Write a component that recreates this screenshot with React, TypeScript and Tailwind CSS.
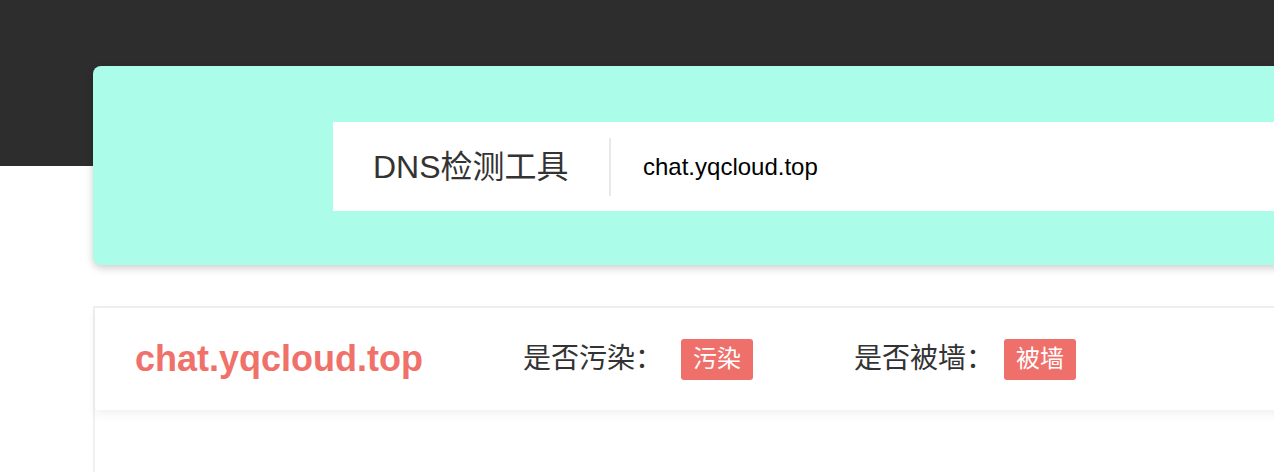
import React from 'react';

const font = "font-['Liberation_Sans','Noto_Sans_CJK_SC',sans-serif]";

const checks = [
  { label: '是否污染：', value: '污染', lead: 'ml-[100px]', gap: 'ml-[18px]' },
  { label: '是否被墙：', value: '被墙', lead: 'ml-[101px]', gap: 'ml-[10px]' },
];

const App: React.FC = () => {
  const domain = 'chat.yqcloud.top';

  return (
    <div className={`h-[472px] w-full overflow-hidden bg-white ${font}`}>
      {/* top dark band */}
      <div className="h-[166px] bg-[#2d2d2d]" />

      <div className="pl-[93px]">
        {/* search card */}
        <div className="-mt-[100px] h-[199px] w-[1300px] rounded-lg bg-[#abfce9] pl-[240px] pt-[56px] shadow-[0_3px_8px_rgba(0,0,0,0.2)]">
          <div className="flex h-[89px] items-center bg-white">
            <div className="w-[276px] pl-10 text-[32px] leading-none text-[#333]">DNS检测工具</div>
            <div className="h-[58px] w-[2px] bg-[#e8e8e8]" />
            <div className="pl-8 text-[24px] leading-none text-black">{domain}</div>
          </div>
        </div>

        {/* result card */}
        <div className="mt-[41px] h-[300px] w-[1300px] border-2 border-[#f0f0f0]">
          <div className="flex h-[102px] items-center pl-10 shadow-[0_4px_10px_rgba(0,0,0,0.06)]">
            <div className="text-[36px] font-bold leading-none text-[#f0716a]">{domain}</div>
            {checks.map((c) => (
              <div key={c.label} className={`${c.lead} flex items-center`}>
                <span className="text-[28px] leading-none text-[#333]">{c.label}</span>
                <span className={`${c.gap} flex h-[41px] items-center rounded-[3px] bg-[#ef706a] px-3 text-[24px] leading-none text-white`}>
                  {c.value}
                </span>
              </div>
            ))}
          </div>
        </div>
      </div>
    </div>
  );
};

export default App;
